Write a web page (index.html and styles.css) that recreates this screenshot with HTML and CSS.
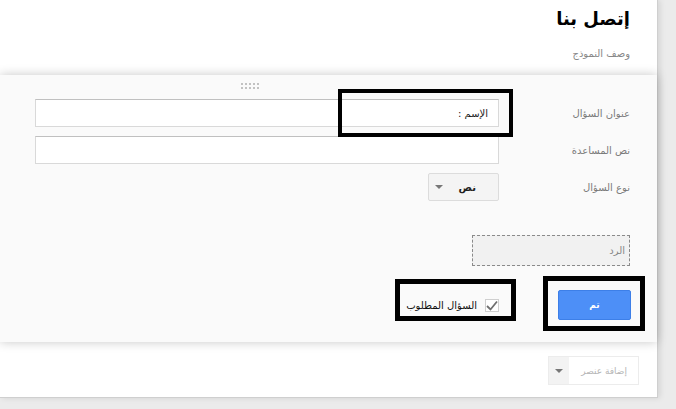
FILE: index.html
```html
<!DOCTYPE html>
<html lang="ar" dir="rtl">
<head>
    <meta charset="UTF-8">
    <meta name="viewport" content="width=device-width, initial-scale=1.0">
    <title>إتصل بنا</title>
    <link rel="stylesheet" href="styles.css">
</head>
<body>
    <div class="form-card">
        <div class="form-header">
            <h1 class="form-title">إتصل بنا</h1>
            <p class="form-desc">وصف النموذج</p>
        </div>

        <div class="edit-panel">
            <div class="drag-handle">
                <svg width="18" height="6" viewBox="0 0 18 6">
                    <g fill="#c2c2c2">
                        <rect x="0" y="0" width="2" height="2"/><rect x="4" y="0" width="2" height="2"/><rect x="8" y="0" width="2" height="2"/><rect x="12" y="0" width="2" height="2"/><rect x="16" y="0" width="2" height="2"/>
                        <rect x="0" y="4" width="2" height="2"/><rect x="4" y="4" width="2" height="2"/><rect x="8" y="4" width="2" height="2"/><rect x="12" y="4" width="2" height="2"/><rect x="16" y="4" width="2" height="2"/>
                    </g>
                </svg>
            </div>

            <div class="field-row">
                <label class="field-label">عنوان السؤال</label>
                <input class="text-input" type="text" value="الإسم :">
            </div>
            <div class="field-row">
                <label class="field-label">نص المساعدة</label>
                <input class="text-input" type="text" value="">
            </div>
            <div class="field-row">
                <label class="field-label">نوع السؤال</label>
                <div class="type-select">
                    <span class="type-text">نص</span>
                    <span class="caret"></span>
                </div>
            </div>

            <div class="answer-box">الرد</div>

            <div class="field-row actions">
                <div class="field-label">
                    <button class="done-btn">تم</button>
                </div>
                <label class="required">
                    <span class="check-box">
                        <svg width="12" height="11" viewBox="0 0 12 11">
                            <path d="M1 6 L4.5 9.5 L11 1.5" fill="none" stroke="#6f6f6f" stroke-width="1.8"/>
                        </svg>
                    </span>
                    <span>السؤال المطلوب</span>
                </label>
            </div>
        </div>

        <div class="add-item">
            <span class="add-text">إضافة عنصر</span>
            <span class="add-caret"><span class="caret"></span></span>
        </div>
    </div>

    <!-- highlight frames drawn over the form -->
    <div class="mark mark-title"></div>
    <div class="mark mark-required"></div>
    <div class="mark mark-done"></div>
</body>
</html>
```

FILE: styles.css
```css
* {
    margin: 0;
    padding: 0;
    box-sizing: border-box;
}

body {
    font-family: "DejaVu Sans", "Liberation Sans", sans-serif;
    background: #ebebeb;
    width: 676px;
    height: 409px;
    overflow: hidden;
    position: relative;
    font-size: 12px;
    color: #333;
}

.form-card {
    width: 658px;
    height: 398px;
    margin-left: 0;
    margin-right: auto;
    background: #fff;
    border-right: 1px solid #cfcfcf;
    border-bottom: 1px solid #cfcfcf;
    box-shadow: 2px 0 6px rgba(0,0,0,0.10);
}

.form-header {
    padding: 5px 27px 0 0;
    height: 75px;
}

.form-title {
    font-size: 18px;
    font-weight: 700;
    color: #000;
    line-height: 28px;
}

.form-desc {
    margin-top: 15px;
    font-size: 10px;
    color: #888;
}

.edit-panel {
    background: #fafafa;
    height: 267px;
    padding: 8px 27px 0 0;
    box-shadow: 0 0 10px rgba(0,0,0,0.22);
    position: relative;
}

.drag-handle {
    display: flex;
    justify-content: center;
    padding-right: 131px;
    height: 6px;
    margin-bottom: 10px;
}

.drag-handle svg {
    display: block;
}

.field-row {
    display: flex;
    align-items: center;
    margin-bottom: 9px;
}

.field-label {
    width: 131px;
    flex: none;
    color: #7a7a7a;
    font-size: 10px;
}

.text-input {
    width: 464px;
    height: 28px;
    border: 1px solid #d9d9d9;
    border-top-color: #c0c0c0;
    background: #fff;
    padding: 0 10px;
    font-family: inherit;
    font-size: 10px;
    color: #222;
    direction: rtl;
    outline: none;
}

.type-select {
    width: 71px;
    height: 28px;
    border: 1px solid #dcdcdc;
    border-radius: 2px;
    background: #f4f4f4;
    display: flex;
    align-items: center;
    justify-content: space-between;
    padding: 0 22px 0 6px;
}

.type-text {
    font-weight: 700;
    font-size: 10px;
    color: #222;
}

.caret {
    width: 0;
    height: 0;
    border-left: 4px solid transparent;
    border-right: 4px solid transparent;
    border-top: 4px solid #777;
}

.answer-box {
    margin-top: 34px;
    width: 158px;
    height: 31px;
    border: 1px dashed #8a8a8a;
    background: #f1f1f1;
    color: #888;
    font-size: 10px;
    display: flex;
    align-items: center;
    padding-right: 4px;
}

.actions {
    margin-top: 24px;
}

.done-btn {
    width: 73px;
    height: 30px;
    background: #4d8ff7;
    border: 1px solid #3d7fe8;
    border-radius: 2px;
    color: #fff;
    font-family: inherit;
    font-size: 9px;
    font-weight: 700;
    margin-right: -1px;
}

.required {
    display: flex;
    align-items: center;
    gap: 8px;
    color: #111;
    font-size: 10px;
}

.check-box {
    flex: none;
    width: 14px;
    height: 13px;
    border: 1px solid #cfcfcf;
    background: #fff;
    display: flex;
    align-items: center;
    justify-content: center;
}

.check-box svg {
    display: block;
}

.add-item {
    margin: 14px 18px 0 0;
    width: 91px;
    height: 29px;
    border: 1px solid #ececec;
    display: flex;
    background: #fff;
}

.add-text {
    flex: 1;
    color: #b5b5b5;
    font-size: 9px;
    display: flex;
    align-items: center;
    padding-right: 11px;
}

.add-caret {
    width: 20px;
    background: #f3f3f3;
    display: flex;
    align-items: center;
    justify-content: center;
}

.mark {
    position: absolute;
    border: 5px solid #000;
}

.mark-title {
    left: 338px;
    top: 89px;
    width: 175px;
    height: 48px;
    border-width: 4px;
}

.mark-required {
    left: 395px;
    top: 279px;
    width: 121px;
    height: 42px;
}

.mark-done {
    left: 543px;
    top: 276px;
    width: 102px;
    height: 55px;
}
```
